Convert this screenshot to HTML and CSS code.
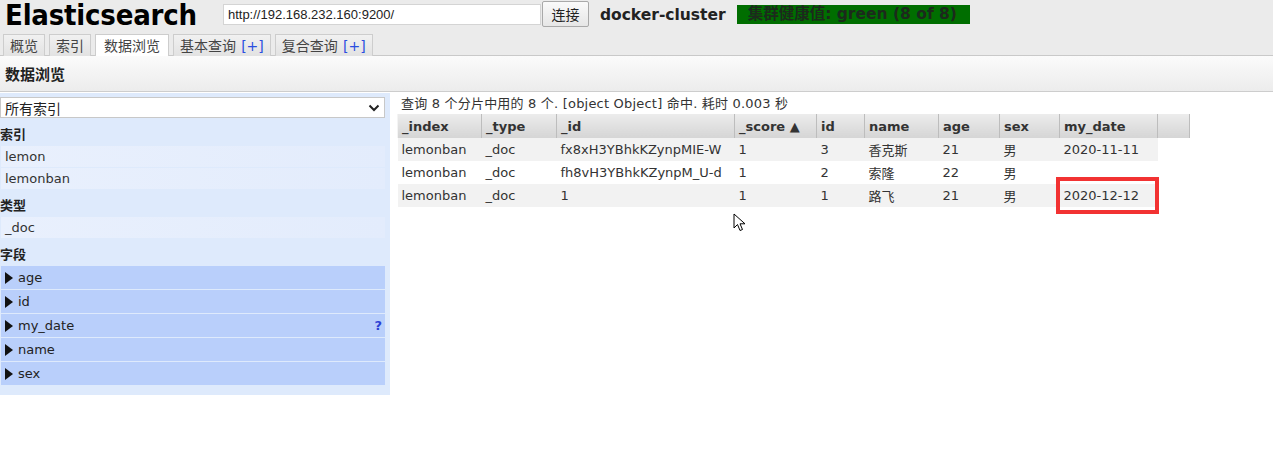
FILE: index.html
```html
<!DOCTYPE html>
<html lang="zh">
<head>
<meta charset="utf-8">
<title>Elasticsearch</title>
<link rel="stylesheet" href="styles.css">
</head>
<body>
<div class="top">
  <div class="header">
    <h1 class="logo">Elasticsearch</h1>
    <div class="url">http://192.168.232.160:9200/</div>
    <button class="connect">连接</button>
    <span class="cluster">docker-cluster</span>
    <span class="health">集群健康值: green (8 of 8)</span>
  </div>
  <div class="tabs">
    <div class="tab">概览</div>
    <div class="tab">索引</div>
    <div class="tab active">数据浏览</div>
    <div class="tab">基本查询 <span class="plus">[+]</span></div>
    <div class="tab">复合查询 <span class="plus">[+]</span></div>
  </div>
</div>
<div class="section-title">数据浏览</div>
<div class="main">
  <div class="side">
    <div class="select"><span>所有索引</span>
      <svg width="12" height="8" viewBox="0 0 12 8"><path d="M1.5 1.5 L6 6 L10.5 1.5" fill="none" stroke="#222" stroke-width="2"/></svg>
    </div>
    <div class="group">索引</div>
    <div class="item">lemon</div>
    <div class="item">lemonban</div>
    <div class="group">类型</div>
    <div class="item">_doc</div>
    <div class="group">字段</div>
    <div class="field"><svg class="tri" width="8" height="12" viewBox="0 0 8 12"><path d="M0 0 L8 6 L0 12 Z" fill="#111"/></svg>age</div>
    <div class="field"><svg class="tri" width="8" height="12" viewBox="0 0 8 12"><path d="M0 0 L8 6 L0 12 Z" fill="#111"/></svg>id</div>
    <div class="field"><svg class="tri" width="8" height="12" viewBox="0 0 8 12"><path d="M0 0 L8 6 L0 12 Z" fill="#111"/></svg>my_date<span class="q">?</span></div>
    <div class="field"><svg class="tri" width="8" height="12" viewBox="0 0 8 12"><path d="M0 0 L8 6 L0 12 Z" fill="#111"/></svg>name</div>
    <div class="field"><svg class="tri" width="8" height="12" viewBox="0 0 8 12"><path d="M0 0 L8 6 L0 12 Z" fill="#111"/></svg>sex</div>
  </div>
  <div class="results">
    <div class="summary">查询 8 个分片中用的 8 个. [object Object] 命中. 耗时 0.003 秒</div>
    <table class="grid">
      <colgroup>
        <col class="c-index"><col class="c-type"><col class="c-id"><col class="c-score"><col class="c-nid"><col class="c-name"><col class="c-age"><col class="c-sex"><col class="c-date"><col class="c-extra">
      </colgroup>
      <thead>
        <tr><th>_index</th><th>_type</th><th>_id</th><th>_score ▲</th><th>id</th><th>name</th><th>age</th><th>sex</th><th>my_date</th><th></th></tr>
      </thead>
      <tbody>
        <tr class="odd"><td>lemonban</td><td>_doc</td><td>fx8xH3YBhkKZynpMIE-W</td><td>1</td><td>3</td><td>香克斯</td><td>21</td><td>男</td><td>2020-11-11</td><td class="blank"></td></tr>
        <tr><td>lemonban</td><td>_doc</td><td>fh8vH3YBhkKZynpM_U-d</td><td>1</td><td>2</td><td>索隆</td><td>22</td><td>男</td><td></td><td class="blank"></td></tr>
        <tr class="odd"><td>lemonban</td><td>_doc</td><td>1</td><td>1</td><td>1</td><td>路飞</td><td>21</td><td>男</td><td class="marked">2020-12-12<span class="mark"></span></td><td class="blank"></td></tr>
      </tbody>
    </table>
    <svg class="cursor" width="14" height="20" viewBox="0 0 14 20"><path d="M1 1 L1 15 L4.5 11.5 L7 17.5 L9.5 16.5 L7 10.8 L12 10.8 Z" fill="#fff" stroke="#000" stroke-width="1"/></svg>
  </div>
</div>
</body>
</html>
```
FILE: styles.css
```css
* { box-sizing: border-box; }
body {
  margin: 0;
  background: #fff;
  font-family: "DejaVu Sans", "Noto Sans CJK SC", sans-serif;
  font-size: 13px;
  color: #333;
}
.top {
  background: #ebebeb;
  border-bottom: 1px solid #c9c9c9;
  height: 56px;
}
.header {
  display: flex;
  align-items: center;
  height: 29px;
  padding-left: 5px;
}
.logo {
  margin: 0;
  font-family: "DejaVu Sans Condensed", "DejaVu Sans", sans-serif;
  font-weight: bold;
  font-size: 29px;
  color: #000;
  letter-spacing: -0.2px;
}
.url {
  margin-left: 26px;
  width: 318px;
  height: 21px;
  background: #fff;
  border: 1px solid #d4d4d4;
  font-family: "Liberation Sans", Arial, sans-serif;
  font-size: 13px;
  color: #222;
  line-height: 19px;
  padding-left: 4px;
}
.connect {
  margin-left: 1px;
  height: 26px;
  width: 47px;
  padding: 0;
  border: 1px solid #a9a9a9;
  border-radius: 2px;
  background: linear-gradient(#fafafa, #e6e6e6);
  font-family: "Noto Sans CJK SC", sans-serif;
  font-size: 14px;
  color: #222;
  align-self: flex-start;
  margin-top: 1px;
}
.cluster {
  margin-left: 11px;
  font-weight: bold;
  font-size: 15.5px;
  color: #222;
}
.health {
  margin-left: 11px;
  background: #006e00;
  color: #1c2a1c;
  font-weight: bold;
  font-size: 15.5px;
  height: 19px;
  line-height: 19px;
  padding: 0 6px 0 11px;
  width: 233px;
  white-space: nowrap;
  overflow: hidden;
}
.tabs {
  display: flex;
  padding: 5px 0 0 3px;
  gap: 4px;
}
.tab {
  height: 22px;
  line-height: 20px;
  padding: 0 6px;
  border: 1px solid #cdcdcd;
  border-bottom: none;
  background: linear-gradient(#f1f1f1, #e2e2e2);
  font-family: "Noto Sans CJK SC", sans-serif;
  font-size: 14px;
  color: #444;
}
.tab.active {
  background: #fff;
  padding: 0 8px;
}
.plus {
  color: #2b4ee0;
  font-family: "DejaVu Sans", sans-serif;
  font-size: 14px;
  margin-left: 2px;
}
.section-title {
  height: 36px;
  line-height: 35px;
  padding-left: 5px;
  background: linear-gradient(#fbfbfb, #ececec);
  border-bottom: 1px solid #cdcdcd;
  font-family: "Noto Sans CJK SC", sans-serif;
  font-weight: bold;
  font-size: 15px;
  color: #222;
}
.main {
  display: flex;
  align-items: flex-start;
  margin-top: 1px;
}
.side {
  width: 390px;
  background: #deeafc;
  padding: 4px 5px 9px 1px;
}
.select {
  display: flex;
  align-items: center;
  justify-content: space-between;
  height: 21px;
  margin-bottom: 1px;
  background: #fff;
  border: 1px solid #c8c8c8;
  padding: 0 4px 0 4px;
  font-family: "Noto Sans CJK SC", sans-serif;
  font-size: 14px;
  color: #222;
  margin-left: -1px;
}
.group {
  height: 27px;
  line-height: 29px;
  font-family: "Noto Sans CJK SC", sans-serif;
  font-weight: bold;
  font-size: 13px;
  color: #222;
  margin-left: -1px;
}
.item {
  height: 21px;
  line-height: 21px;
  margin-bottom: 1px;
  padding-left: 4px;
  background: linear-gradient(90deg, #e9f0fd, #e3ecfc);
  color: #333;
}
.field {
  display: flex;
  align-items: center;
  height: 23px;
  margin-bottom: 1px;
  padding-left: 4px;
  background: #b9cffb;
  color: #222;
}
.tri { margin-right: 5px; }
.q {
  margin-left: auto;
  margin-right: 3px;
  color: #2c42d6;
  font-weight: bold;
}
.results {
  position: relative;
  margin-left: 7px;
  flex: 1;
}
.summary {
  height: 21px;
  line-height: 21px;
  padding-left: 4px;
  font-size: 13px;
  letter-spacing: 0.2px;
  color: #333;
}
.grid {
  border-collapse: collapse;
  table-layout: fixed;
  width: 792px;
}
.c-index { width: 84px; }
.c-type { width: 75px; }
.c-id { width: 178px; }
.c-score { width: 82px; }
.c-nid { width: 48px; }
.c-name { width: 74px; }
.c-age { width: 61px; }
.c-sex { width: 60px; }
.c-date { width: 98px; }
.c-extra { width: 32px; }
.grid th {
  height: 24px;
  text-align: left;
  padding: 0 4px;
  font-weight: bold;
  color: #333;
  background: linear-gradient(#ececec, #d5d5d5);
  border-left: 1px solid #f4f4f4;
  border-right: 1px solid #bdbdbd;
  white-space: nowrap;
}
.grid td {
  height: 23px;
  padding: 0 4px;
  white-space: nowrap;
  overflow: visible;
}
.grid tr.odd td { background: #f2f2f2; }
.grid tr.odd td.blank { background: transparent; }
.marked { position: relative; }
.mark {
  position: absolute;
  top: -7px;
  bottom: -7px;
  left: -4px;
  right: -1px;
  border: 4px solid #f23232;
}
.cursor {
  position: absolute;
  left: 336px;
  top: 120px;
}
```
